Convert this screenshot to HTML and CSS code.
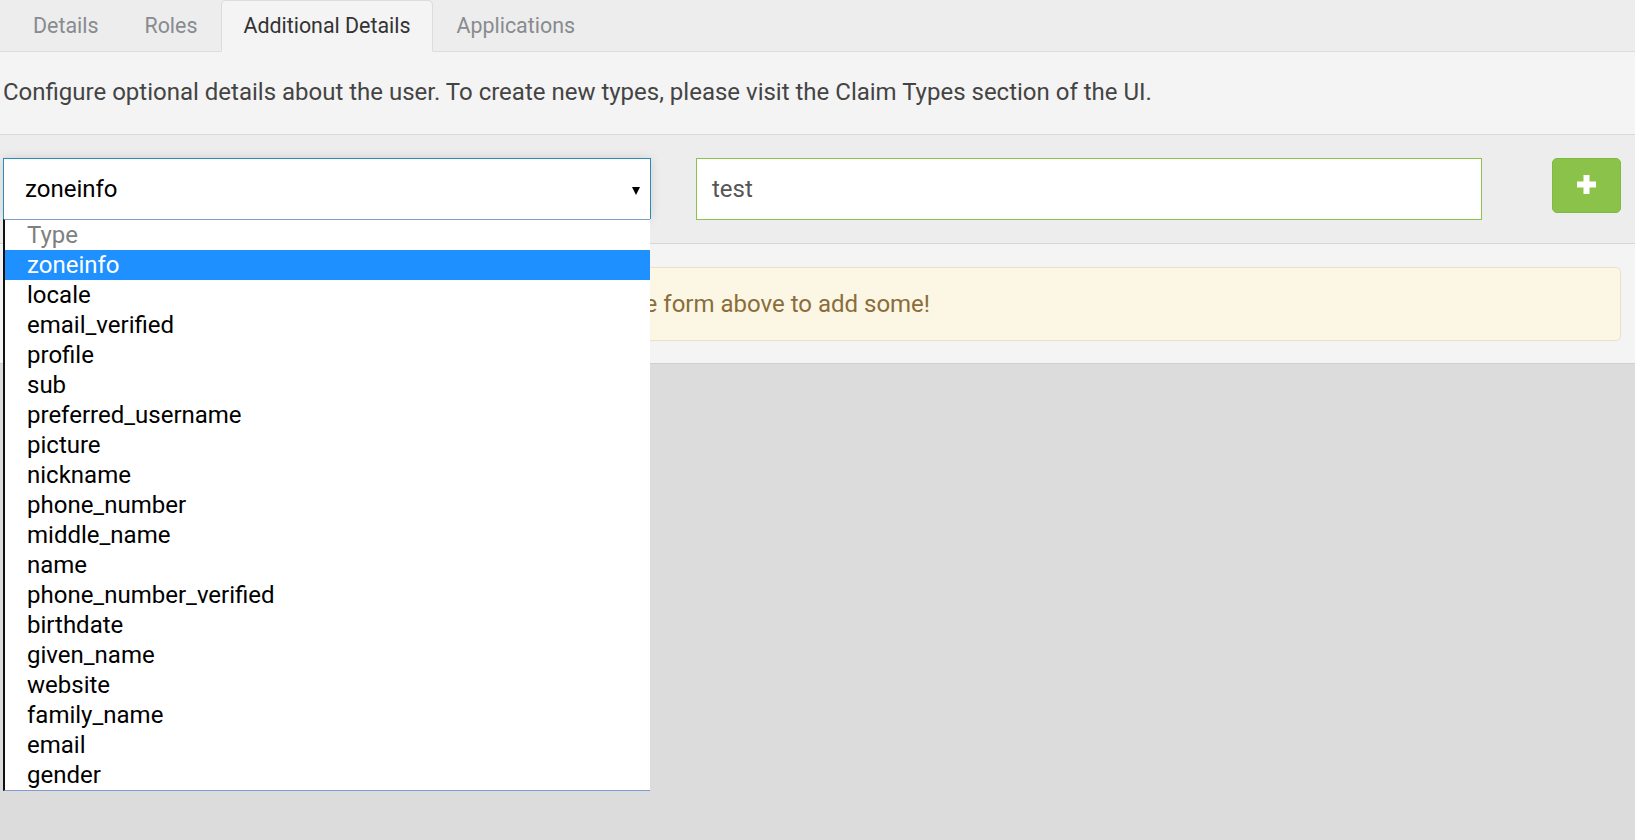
FILE: index.html
```html
<!DOCTYPE html>
<html>
<head>
<meta charset="utf-8">
<link rel="stylesheet" href="styles.css">
</head>
<body>
<div class="page">
  <nav class="tabs">
    <div class="tab">Details</div>
    <div class="tab">Roles</div>
    <div class="tab active">Additional Details</div>
    <div class="tab">Applications</div>
  </nav>
  <div class="desc">Configure optional details about the user. To create new types, please visit the Claim Types section of the UI.</div>
  <div class="form-row">
    <div class="select">
      <span class="select-value">zoneinfo</span>
      <svg class="select-arrow" width="8" height="8" viewBox="0 0 8 8"><polygon points="0,0 8,0 4,8" fill="#000"/></svg>
      <ul class="dropdown">
        <li class="placeholder">Type</li>
        <li class="selected">zoneinfo</li>
        <li>locale</li>
        <li>email_verified</li>
        <li>profile</li>
        <li>sub</li>
        <li>preferred_username</li>
        <li>picture</li>
        <li>nickname</li>
        <li>phone_number</li>
        <li>middle_name</li>
        <li>name</li>
        <li>phone_number_verified</li>
        <li>birthdate</li>
        <li>given_name</li>
        <li>website</li>
        <li>family_name</li>
        <li>email</li>
        <li>gender</li>
      </ul>
    </div>
    <div class="text-input">test</div>
    <button class="add-btn" type="button">
      <svg width="19" height="19" viewBox="0 0 19 19"><rect x="6.5" y="0" width="6" height="19" fill="#fff"/><rect x="0" y="6.5" width="19" height="6" fill="#fff"/></svg>
    </button>
  </div>
  <div class="alert-area">
    <div class="alert">No additional details have been added to this user. Use the form above to add some!</div>
  </div>
</div>
</body>
</html>
```
FILE: styles.css
```css
html, body {
  margin: 0;
  padding: 0;
  background: #dcdcdc;
  font-family: Roboto, "Noto Sans", sans-serif;
}
.page {
  width: 1635px;
  min-height: 840px;
  background: #dcdcdc;
}
.tabs {
  display: flex;
  align-items: flex-end;
  height: 52px;
  box-sizing: border-box;
  background: #ededed;
  border-bottom: 1px solid #dcdcdc;
  padding-left: 11px;
}
.tab {
  margin-bottom: -1px;
  margin-right: 2px;
  border: 1px solid transparent;
  border-radius: 5px 5px 0 0;
  padding: 10px 21px 10px;
  line-height: 30px;
  font-size: 21.4px;
  color: #888b8f;
}
.tab.active {
  background: #f4f4f4;
  border-color: #dcdcdc;
  border-bottom-color: #f4f4f4;
  color: #333;
}
.desc {
  background: #f4f4f4;
  border-bottom: 1px solid #d9d9d9;
  padding: 25px 3px 27px 3px;
  line-height: 30px;
  font-size: 24px;
  color: #444;
}
.form-row {
  display: flex;
  align-items: flex-start;
  background: #ededed;
  border-bottom: 1px solid #d6d6d6;
  padding: 23px 14px 23px 3px;
}
.select {
  position: relative;
  width: 648px;
  height: 61px;
  box-sizing: border-box;
  border: 1px solid #2a8db4;
  border-bottom: none;
  background: #fff;
  box-shadow: 0 0 10px rgba(0, 0, 0, 0.12);
  display: flex;
  align-items: center;
  padding: 0 10px 0 21px;
}
.select-value {
  flex: 1;
  font-size: 24px;
  color: #000;
  line-height: 60px;
}
.select-arrow {
  display: block;
  margin-top: 3px;
}
.dropdown {
  position: absolute;
  top: 60px;
  left: -1px;
  width: 647px;
  box-sizing: border-box;
  margin: 0;
  padding: 0;
  list-style: none;
  background: #fff;
  border-top: 1px solid #7e9cd0;
  border-bottom: 1px solid #7e9cd0;
  border-left: 2px solid #111;
  z-index: 5;
}
.dropdown li {
  height: 30px;
  line-height: 30px;
  padding-left: 22px;
  font-size: 24px;
  color: #000;
  white-space: nowrap;
}
.dropdown li.placeholder {
  color: #808080;
}
.dropdown li.selected {
  background: #1e90ff;
  color: #fff;
}
.text-input {
  margin-left: 45px;
  width: 786px;
  height: 62px;
  box-sizing: border-box;
  border: 1px solid #8bc34a;
  background: #fff;
  padding-left: 15px;
  line-height: 60px;
  font-size: 24px;
  color: #555;
}
.add-btn {
  margin-left: 70px;
  width: 69px;
  height: 55px;
  border: 1px solid #80b844;
  border-radius: 5px;
  background: #8bc34a;
  display: flex;
  align-items: center;
  justify-content: center;
  padding: 0 0 2px 0;
  cursor: pointer;
}
.add-btn svg {
  display: block;
}
.alert-area {
  background: #f4f4f4;
  border-bottom: 1px solid #d0d0d0;
  padding: 23px 14px 22px 3px;
}
.alert {
  background: #fcf7e4;
  border: 1px solid #e8e2c9;
  border-radius: 5px;
  padding: 21px 15px 21px 31px;
  line-height: 30px;
  font-size: 24px;
  color: #8a6d3b;
  white-space: nowrap;
}
```
